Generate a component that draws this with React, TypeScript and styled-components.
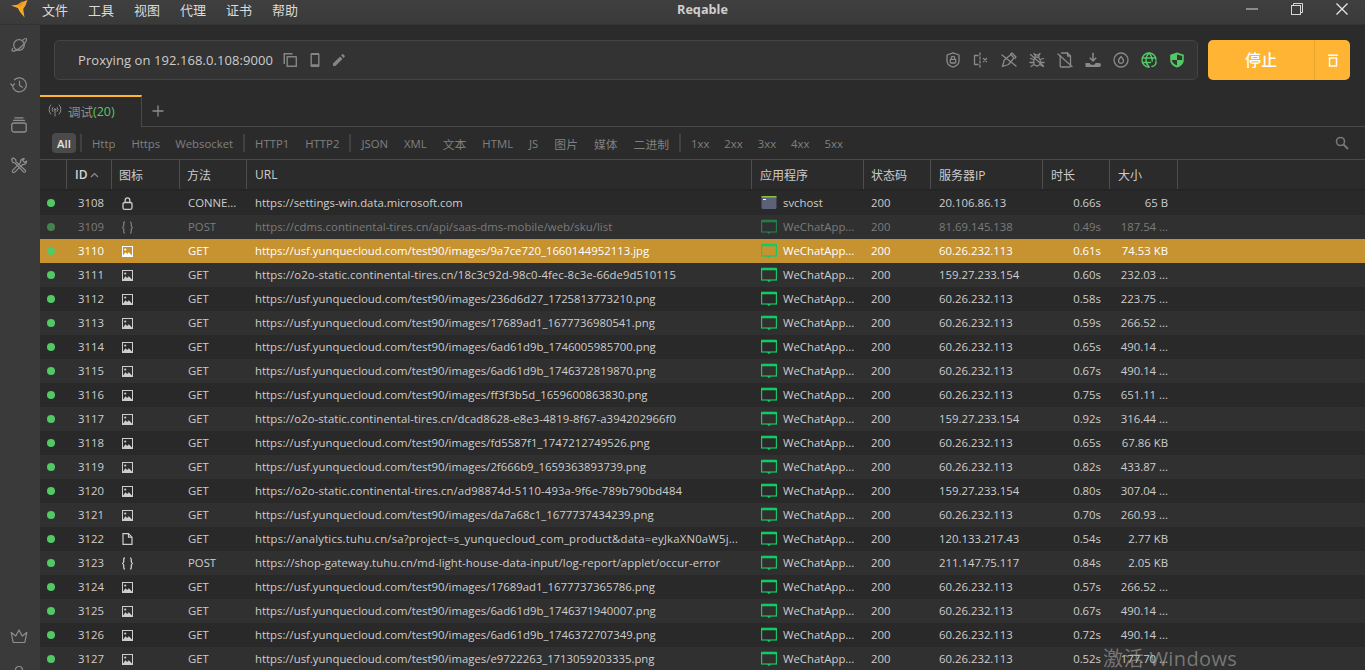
import React from 'react';
import styled, { createGlobalStyle } from 'styled-components';

const Global = createGlobalStyle`
  html, body { margin: 0; padding: 0; height: 100%; background: #2b2b2b; overflow: hidden; }
  #root { height: 100%; }
  * { box-sizing: border-box; }
`;

const FONT = `"Open Sans", "Noto Sans", "Noto Sans CJK SC", sans-serif`;

const Shell = styled.div`
  position: relative;
  width: 1365px;
  height: 670px;
  overflow: hidden;
  display: flex;
  flex-direction: column;
  background: #2b2b2b;
  color: #cfcfcf;
  font-family: ${FONT};
  font-size: 11.35px;
`;
const TitleBar = styled.header`
  height: 25px;
  flex: none;
  display: flex;
  align-items: center;
  padding-bottom: 6px;
  background: linear-gradient(#3f3f3f, #3a3a3a);
  border-bottom: 1px solid #333333;
`;
const TitleLeft = styled.div`
  width: 677px;
  flex: none;
  display: flex;
  align-items: center;
  padding-left: 11px;
`;
const Menu = styled.nav`
  display: flex;
  gap: 20px;
  margin-left: 13px;
  font-size: 13px;
  color: #dadada;
`;
const AppName = styled.div`
  font-size: 12.7px;
  font-weight: 700;
  color: #cfcfcf;
`;
const WinControls = styled.div`
  margin-left: auto;
  display: flex;
  align-items: center;
  gap: 33px;
  padding-right: 17px;
`;
const Body = styled.div`
  flex: 1;
  min-height: 0;
  display: flex;
`;
const Sidebar = styled.aside`
  width: 40px;
  flex: none;
  display: flex;
  flex-direction: column;
  align-items: center;
  background: #3a3a3a;
  padding-right: 2px;
  color: #8e8e8e;
`;
const SideIcon = styled.div`
  height: 40px;
  flex: none;
  display: flex;
  align-items: center;
  justify-content: center;
`;
const SideSpacer = styled.div`
  flex: 1;
`;
const SideBottom = styled.div`
  height: 43px;
  flex: none;
  display: flex;
  flex-direction: column;
  align-items: center;
  overflow: hidden;
  gap: 20px;
  svg { flex: none; }
`;
const Main = styled.main`
  flex: 1;
  min-width: 0;
  display: flex;
  flex-direction: column;
`;
const TopRow = styled.div`
  height: 70px;
  flex: none;
  display: flex;
  gap: 10px;
  padding: 15px 15px 0 14px;
`;
const ProxyBar = styled.div`
  width: 1144px;
  height: 40px;
  display: flex;
  align-items: center;
  background: #333333;
  border: 1px solid #444444;
  border-radius: 5px;
  padding: 0 12px 0 23px;
`;
const ProxyText = styled.span`
  font-size: 13px;
  letter-spacing: 0.07px;
  color: #cccccc;
  margin-right: 6px;
`;
const ProxyAction = styled.span`
  display: flex;
  width: 24px;
  justify-content: center;
  color: #858585;
`;
const StatusIcons = styled.div`
  margin-left: auto;
  display: flex;
  gap: 12px;
  align-items: center;
`;
const StatusIcon = styled.span<{ $on?: boolean }>`
  display: flex;
  color: ${p => (p.$on ? '#55c866' : '#8a8a8a')};
`;
const StopButton = styled.div`
  width: 142px;
  height: 40px;
  display: flex;
  border-radius: 5px;
  background: #ffb433;
  color: #ffffff;
`;
const StopLabel = styled.div`
  width: 107px;
  display: flex;
  align-items: center;
  justify-content: center;
  padding-bottom: 2px;
  font-size: 16px;
  font-weight: 500;
  border-right: 1px solid #eaa52e;
`;
const StopTrash = styled.div`
  flex: 1;
  display: flex;
  align-items: center;
  justify-content: center;
`;
const TabBar = styled.div`
  height: 32px;
  flex: none;
  display: flex;
  align-items: center;
  border-bottom: 1px solid #4a4a4a;
`;
const Tab = styled.div`
  width: 102px;
  height: 32px;
  display: flex;
  align-items: center;
  padding: 0 0 2px 8px;
  border-top: 2px solid #ffb433;
  border-right: 1px solid #4a4a4a;
  background: #2b2b2b;
  color: #8d8d8d;
  font-size: 12.5px;
  margin-bottom: -1px;
`;
const TabLabel = styled.span`
  margin-left: 6px;
`;
const TabCount = styled.span`
  color: #55c866;
  font-size: 12.5px;
`;
const AddTab = styled.div`
  display: flex;
  margin-left: 10px;
  color: #8d8d8d;
`;
const FilterRow = styled.div`
  height: 33px;
  flex: none;
  display: flex;
  align-items: center;
  padding: 0 16px 0 12px;
  border-bottom: 1px solid #4a4a4a;
  color: #808080;
`;
const Chip = styled.span<{ $active?: boolean; $gap?: number; $cjk?: boolean }>`
  margin-right: ${p => p.$gap ?? 16}px;
  font-size: ${p => (p.$cjk ? '11.8px' : '11.35px')};
  ${p => p.$active && `
    width: 24px;
    height: 20px;
    display: flex;
    align-items: center;
    justify-content: center;
    background: #4a4a4a;
    border-radius: 4px;
    color: #e2e2e2;
    font-weight: 600;
  `}
`;
const Divider = styled.span`
  width: 2px;
  height: 18px;
  background: #414141;
  margin-right: 10px;
`;
const SearchIcon = styled.span`
  margin-left: auto;
  display: flex;
  color: #777777;
`;

const COLS = '27px 45px 68px 67px 505px 112px 67px 112px 67px 68px 1fr';

const HeaderRow = styled.div`
  height: 31px;
  flex: none;
  display: grid;
  grid-template-columns: ${COLS};
  border-bottom: 2px solid #252525;
`;
const HeadCell = styled.div<{ $pad?: number }>`
  display: flex;
  align-items: center;
  height: 29px;
  padding-left: ${p => p.$pad ?? 8}px;
  border-right: 1px solid #4e4e4e;
  color: #cccccc;
  font-size: 12px;
  white-space: nowrap;
`;
const SortId = styled.span`
  font-weight: 600;
  color: #d4d4d4;
  margin-right: 3px;
`;
const SortArrow = styled.span`
  display: flex;
  color: #8d8d8d;
`;
const Rows = styled.div`
  flex: 1;
  min-height: 0;
  overflow: hidden;
`;
const Row = styled.div<{ $idx: number; $selected?: boolean; $dim?: boolean }>`
  height: 24px;
  display: grid;
  grid-template-columns: ${COLS};
  align-items: center;
  background: ${p => (p.$selected ? '#c79230' : p.$idx % 2 === 0 ? '#292929' : '#303030')};
  color: ${p => (p.$selected ? '#ffffff' : p.$dim ? '#7b7b7b' : '#cdcdcd')};
  white-space: nowrap;
`;
const Dot = styled.span<{ $dim?: boolean }>`
  width: 8px;
  height: 8px;
  border-radius: 50%;
  margin-left: 7px;
  background: ${p => (p.$dim ? '#44824f' : '#55c866')};
`;
const TextCell = styled.span`
  padding-bottom: 2px;
`;
const IdCell = styled(TextCell)`
  padding-left: 11px;
`;
const IconCell = styled.span`
  display: flex;
  padding-left: 10px;
`;
const MethodCell = styled(TextCell)`
  padding-left: 8px;
`;
const UrlCell = styled(TextCell)<{ $fit?: number }>`
  padding-left: 8px;
  letter-spacing: ${p => p.$fit ?? 0}px;
`;
const AppCell = styled.span`
  display: flex;
  align-items: center;
  padding-left: 9px;
  gap: 6px;
`;
const AppLabel = styled(TextCell)``;
const StatusCell = styled(TextCell)`
  padding-left: 7px;
`;
const IpCell = styled(TextCell)`
  padding-left: 8px;
`;
const TimeCell = styled(TextCell)`
  text-align: right;
  padding-right: 9px;
`;
const SizeCell = styled(TextCell)`
  text-align: right;
  padding-right: 10px;
`;
const Watermark = styled.div`
  position: absolute;
  left: 1103px;
  top: 643px;
  font-family: "Open Sans", "Noto Sans CJK SC", sans-serif;
  font-size: 20px;
  letter-spacing: 0.4px;
  color: rgba(180, 180, 180, 0.55);
  pointer-events: none;
  white-space: nowrap;
`;

const Ico = ({ s = 16, w = 16, h, sw = 1.3, children }: { s?: number; w?: number; h?: number; sw?: number; children: React.ReactNode }) => (
  <svg width={s} height={h ? (s * h) / w : s} viewBox={`0 0 ${w} ${h ?? w}`} fill="none" stroke="currentColor" strokeWidth={sw} strokeLinecap="round" strokeLinejoin="round">
    {children}
  </svg>
);

const Logo = () => (
  <svg width="18" height="18" viewBox="0 0 18 18">
    <path d="M0 5.500 L6.500 4.800 L10 2.600 L16.500 0 L14.500 5.500 L12.200 9 L13.500 17.500 L9 12 L6.800 8 Z" fill="#f7a72a" />
    <path d="M6.500 4.800 L10 2.600 L10.800 1 L12 3.500 L9 7 Z" fill="#e8931a" />
  </svg>
);

const Planet = () => (
  <Ico s={18} w={18} sw={1.2}>
    <circle cx="9" cy="9" r="5.300" />
    <path d="M13 4c1.300-1.200 2.600-1.800 3.300-1.300 1 .8-.4 3.400-3.200 6.300-3.200 3.300-7.300 6-9.800 6.200-1.500.1-1.700-1-.6-2.700" />
  </Ico>
);
const HistoryIco = () => (
  <Ico s={18} w={18} sw={1.2}>
    <path d="M2.400 9.500A7 7 0 1 0 4.500 3.800" />
    <path d="M.8 7.800l1.700 2 2-1.800" />
    <path d="M9.500 5.200V9.500l3 1.700" />
  </Ico>
);
const LayersIco = () => (
  <Ico s={18} w={18} sw={1.3}>
    <rect x="1.800" y="7" width="14.400" height="9" rx="2" />
    <path d="M3.500 4.300h11" />
    <path d="M5 1.800h8" />
  </Ico>
);
const ToolsIco = () => (
  <Ico s={18} w={18} sw={1.2}>
    <path d="M3 1.800l2.600 1.600.4 2.200 9.200 8.600a1.200 1.200 0 0 1-1.700 1.700L5 7 2.800 6.400 1.600 3.500z" />
    <path d="M10.600 6.400L2.800 14.200a1.400 1.400 0 0 0 2 2l7.800-7.800c2 .6 4.200-1 4-3.400l-2 1.500-1.800-1.800 1.500-2c-2.500-.2-4.200 1.700-3.700 3.700z" />
  </Ico>
);
const Crown = () => (
  <Ico s={18} w={18} sw={1.200}>
    <path d="M3.200 15.500L1.200 5.500 5.800 9 9 3l3.200 6 4.600-3.500-2 10z" />
  </Ico>
);
const AvatarPeek = () => (
  <Ico s={14} w={14} sw={1.200}>
    <circle cx="7" cy="5" r="3.500" />
  </Ico>
);
const CopyIco = () => (
  <svg width="15" height="16" viewBox="0 0 15 16" fill="currentColor">
    <path d="M.5 1h9v1.400H2V12H.5z" />
    <path fillRule="evenodd" d="M3.500 4H13a1 1 0 0 1 1 1v10H3.500zm1.400 1.400v8.200h7.700V5.400z" />
  </svg>
);
const PhoneIco = () => (
  <svg width="16" height="16" viewBox="0 0 16 16" fill="currentColor">
    <path fillRule="evenodd" d="M4.800 1h6.400c.7 0 1.300.6 1.300 1.300v11.400c0 .7-.6 1.300-1.300 1.300H4.800c-.7 0-1.300-.6-1.300-1.300V2.300C3.500 1.600 4.100 1 4.800 1zm.1 2v9.200h6.200V3z" />
  </svg>
);
const PenIco = () => (
  <svg width="14" height="14" viewBox="0 0 14 14" fill="currentColor">
    <path d="M1 10.600V13h2.400l7.100-7.100-2.400-2.400zM12.700 3.700a.7.7 0 0 0 0-1L11.300 1.300a.7.7 0 0 0-1 0L9.100 2.500l2.400 2.400z" />
  </svg>
);
const ShieldLock = () => (
  <Ico s={16} w={16}>
    <path d="M8 .8l6 2.200v6c0 3-2.800 5-6 6.200-3.200-1.200-6-3.200-6-6.200V3z" />
    <rect x="5.300" y="7.300" width="5.400" height="3.700" rx=".8" />
    <path d="M6.300 7.300V6a1.700 1.700 0 0 1 3.400 0v1.300" />
  </Ico>
);
const SplitX = () => (
  <Ico s={16} w={16}>
    <path d="M7 .8v2.200M7 5v2M7 9v2M7 13v2.200" />
    <path d="M5 3.500H1.500v9H5" />
    <path d="M10.500 6.500l3 3M13.500 6.500l-3 3" />
  </Ico>
);
const PenOff = () => (
  <Ico s={16} w={16}>
    <path d="M1 3l14 11" />
    <path d="M1.500 14.500l1.800-6.500 6.700-5.500 3 3.500-5.500 6.500z" />
    <path d="M9.500 2l1.500-1 4 4-1 1.500" />
  </Ico>
);
const BugOff = () => (
  <Ico s={16} w={16}>
    <path d="M1.500 2.500l13 11.500" />
    <ellipse cx="8" cy="9.500" rx="3.300" ry="4.500" />
    <path d="M6 4.800a2 2 0 0 1 4 0M5 1.500l1.500 2M11 1.500l-1.500 2M1.500 6.500l3.200 1M14.500 6.500l-3.200 1M1 10.500h3.700M11.300 10.500H15M2 14.500l3-2M14 14.500l-3-2" />
  </Ico>
);
const DocOff = () => (
  <Ico s={16} w={16}>
    <path d="M1 2l14 12.500" />
    <path d="M4.500 1h6l3 3v10.200a.8.8 0 0 1-.8.8H4a.8.8 0 0 1-.8-.8V3.500" />
    <path d="M10.500 1v3h3" />
  </Ico>
);
const DownloadDisk = () => (
  <svg width="16" height="16" viewBox="0 0 16 16">
    <path d="M8 .8v8.200M4.800 5.800L8 9l3.200-3.200" fill="none" stroke="currentColor" strokeWidth="1.500" />
    <path d="M.5 11h4l1.500 1.700h3.500l1-1.700h3.500a2 2 0 0 1 0 4H.5z" fill="currentColor" />
  </svg>
);
const Drop = () => (
  <Ico s={16} w={16}>
    <circle cx="8" cy="8" r="7" />
    <path d="M8 4.500s2.500 2.700 2.500 4.300a2.500 2.500 0 0 1-5 0C5.500 7.200 8 4.500 8 4.500z" />
  </Ico>
);
const GlobeSync = () => (
  <Ico s={16} w={16} sw={1.400}>
    <path d="M15 8A7 7 0 1 0 8 15" />
    <path d="M1.500 6h13M1.500 10.500h8M8 1c-4 4-4 10 0 14M8 1c2.400 2.400 3.300 5.400 3.200 8" />
    <path d="M15 9.500a4.500 4.500 0 0 1-4 5" />
  </Ico>
);
const ShieldFill = () => (
  <svg width="16" height="16" viewBox="0 0 16 16">
    <path d="M8 .4l6.800 2.400v5.200c0 3.600-2.900 6.400-6.800 7.600-3.900-1.200-6.800-4-6.800-7.600V2.800z" fill="#55c866" />
    <path d="M8 2.400V8h5.200V4.100zM8 8H2.800c.3 2.500 2.400 4.400 5.200 5.400z" fill="#2d3a30" />
  </svg>
);
const WifiIco = () => (
  <Ico s={14} w={14} sw={1}>
    <circle cx="7" cy="5.500" r=".8" fill="currentColor" />
    <path d="M7 7v5" />
    <path d="M4.800 7.500a3 3 0 0 1 0-4M9.200 3.500a3 3 0 0 1 0 4M2.800 10a6.500 6.500 0 0 1 0-9M11.200 1a6.500 6.500 0 0 1 0 9" />
  </Ico>
);
const LockIco = () => (
  <svg width="11" height="13" viewBox="0 0 11 13" fill="none" stroke="currentColor" strokeWidth="1.300">
    <rect x="1" y="5.500" width="9" height="6.800" rx="1.500" />
    <path d="M3.200 5.500V3.200a2.300 2.300 0 0 1 4.600 0v2.300" />
  </svg>
);
const BracesIco = () => (
  <svg width="11" height="13" viewBox="0 0 11 13" fill="none" stroke="currentColor" strokeWidth="1.300">
    <path d="M3 .8c-1.300 0-1.300.9-1.300 1.900v2c0 .9-.7 1.500-1.200 1.800.5.300 1.200.9 1.200 1.800v2c0 1 0 1.900 1.300 1.900" />
    <path d="M8 .8c1.300 0 1.300.9 1.300 1.900v2c0 .9.700 1.500 1.200 1.800-.5.300-1.200.9-1.200 1.800v2c0 1 0 1.900-1.300 1.900" />
  </svg>
);
const ImageIco = () => (
  <svg width="11" height="11" viewBox="0 0 11 11">
    <rect x=".5" y=".5" width="10" height="10" fill="none" stroke="currentColor" />
    <path d="M1 9.500L3.500 6.300 5.200 8l1.600-1.700L10 9.500V10.500H1z" fill="currentColor" />
    <circle cx="3.200" cy="3.500" r="1.100" fill="currentColor" />
  </svg>
);
const FileIco = () => (
  <svg width="11" height="12" viewBox="0 0 11 12" fill="none" stroke="currentColor" strokeWidth="1.200">
    <path d="M1 .7h5.500L10 4.200v7.100H1z" />
    <path d="M6.500 .7v3.500H10" />
  </svg>
);
const WeChatApp = ({ faded }: { faded?: boolean }) => (
  <svg width="16" height="16" viewBox="0 0 16 16" opacity={faded ? 0.5 : 1}>
    <rect x=".6" y="1.500" width="14.800" height="11.500" fill="none" stroke="#17c964" strokeWidth="1.200" />
    <rect x=".6" y=".8" width="14.800" height="2.500" fill="#17c964" />
    <path d="M6 13h4l-2 2.200z" fill="#17c964" />
  </svg>
);
const SvchostIco = () => (
  <svg width="16" height="16" viewBox="0 0 16 16">
    <rect x=".5" y="1" width="15" height="13" rx="1.500" fill="#5c6078" />
    <rect x=".5" y="1" width="15" height="1.500" fill="#8cbf3f" />
    <rect x="2" y="4" width="3" height="1" fill="#ffffff" />
  </svg>
);

const pic = 'https://usf.yunquecloud.com/test90/images/';
const o2o = 'https://o2o-static.continental-tires.cn/';
const IP = '60.26.232.113';
const IP2 = '159.27.233.154';
type Kind = 'lock' | 'json' | 'image' | 'file';
type Req = { id: number; k: Kind; m: string; u: string; ip: string; t: string; s: string; fit?: number };
const W: Req[] = [
  { id: 3108, k: 'lock', m: 'CONNE...', u: 'https://settings-win.data.microsoft.com', ip: '20.106.86.13', t: '0.66s', s: '65 B' },
  { id: 3109, k: 'json', m: 'POST', u: 'https://cdms.continental-tires.cn/api/saas-dms-mobile/web/sku/list', ip: '81.69.145.138', t: '0.49s', s: '187.54 ...', fit: 0.045 },
  { id: 3110, k: 'image', m: 'GET', u: pic + '9a7ce720_1660144952113.jpg', ip: IP, t: '0.61s', s: '74.53 KB' },
  { id: 3111, k: 'image', m: 'GET', u: o2o + '18c3c92d-98c0-4fec-8c3e-66de9d510115', ip: IP2, t: '0.60s', s: '232.03 ...', fit: 0.08 },
  { id: 3112, k: 'image', m: 'GET', u: pic + '236d6d27_1725813773210.png', ip: IP, t: '0.58s', s: '223.75 ...' },
  { id: 3113, k: 'image', m: 'GET', u: pic + '17689ad1_1677736980541.png', ip: IP, t: '0.59s', s: '266.52 ...' },
  { id: 3114, k: 'image', m: 'GET', u: pic + '6ad61d9b_1746005985700.png', ip: IP, t: '0.65s', s: '490.14 ...' },
  { id: 3115, k: 'image', m: 'GET', u: pic + '6ad61d9b_1746372819870.png', ip: IP, t: '0.67s', s: '490.14 ...' },
  { id: 3116, k: 'image', m: 'GET', u: pic + 'ff3f3b5d_1659600863830.png', ip: IP, t: '0.75s', s: '651.11 ...' },
  { id: 3117, k: 'image', m: 'GET', u: o2o + 'dcad8628-e8e3-4819-8f67-a394202966f0', ip: IP2, t: '0.92s', s: '316.44 ...', fit: 0.07 },
  { id: 3118, k: 'image', m: 'GET', u: pic + 'fd5587f1_1747212749526.png', ip: IP, t: '0.65s', s: '67.86 KB' },
  { id: 3119, k: 'image', m: 'GET', u: pic + '2f666b9_1659363893739.png', ip: IP, t: '0.82s', s: '433.87 ...' },
  { id: 3120, k: 'image', m: 'GET', u: o2o + 'ad98874d-5110-493a-9f6e-789b790bd484', ip: IP2, t: '0.80s', s: '307.04 ...', fit: 0.08 },
  { id: 3121, k: 'image', m: 'GET', u: pic + 'da7a68c1_1677737434239.png', ip: IP, t: '0.70s', s: '260.93 ...' },
  { id: 3122, k: 'file', m: 'GET', u: 'https://analytics.tuhu.cn/sa?project=s_yunquecloud_com_product&data=eyJkaXN0aW5j...', ip: '120.133.217.43', t: '0.54s', s: '2.77 KB', fit: 0.18 },
  { id: 3123, k: 'json', m: 'POST', u: 'https://shop-gateway.tuhu.cn/md-light-house-data-input/log-report/applet/occur-error', ip: '211.147.75.117', t: '0.84s', s: '2.05 KB', fit: 0.095 },
  { id: 3124, k: 'image', m: 'GET', u: pic + '17689ad1_1677737365786.png', ip: IP, t: '0.57s', s: '266.52 ...' },
  { id: 3125, k: 'image', m: 'GET', u: pic + '6ad61d9b_1746371940007.png', ip: IP, t: '0.67s', s: '490.14 ...' },
  { id: 3126, k: 'image', m: 'GET', u: pic + '6ad61d9b_1746372707349.png', ip: IP, t: '0.72s', s: '490.14 ...' },
  { id: 3127, k: 'image', m: 'GET', u: pic + 'e9722263_1713059203335.png', ip: IP, t: '0.52s', s: '177.70 ...' },
];
const kindIcon = (k: Kind) =>
  k === 'lock' ? <LockIco /> : k === 'json' ? <BracesIco /> : k === 'file' ? <FileIco /> : <ImageIco />;

const menus = ['文件', '工具', '视图', '代理', '证书', '帮助'];
const heads = ['图标', '方法', 'URL', '应用程序', '状态码', '服务器IP', '时长', '大小'];

export default function App() {
  return (
    <Shell>
      <Global />
      <TitleBar>
        <TitleLeft>
          <Logo />
          <Menu>{menus.map(m => <span key={m}>{m}</span>)}</Menu>
        </TitleLeft>
        <AppName>Reqable</AppName>
        <WinControls>
          <svg width="12" height="12" viewBox="0 0 12 12" stroke="#d8d8d8" fill="none"><path d="M0 6h12" /></svg>
          <svg width="12" height="12" viewBox="0 0 12 12" stroke="#d8d8d8" fill="none"><rect x=".5" y="2.500" width="9" height="9" /><path d="M2.500 2.500V.5h9v9h-2" /></svg>
          <svg width="12" height="12" viewBox="0 0 12 12" stroke="#e8e8e8" strokeWidth="1.300" fill="none"><path d="M.5.500l11 11M11.500.5l-11 11" /></svg>
        </WinControls>
      </TitleBar>
      <Body>
        <Sidebar>
          <SideIcon><Planet /></SideIcon>
          <SideIcon><HistoryIco /></SideIcon>
          <SideIcon><LayersIco /></SideIcon>
          <SideIcon><ToolsIco /></SideIcon>
          <SideSpacer />
          <SideBottom><Crown /><AvatarPeek /></SideBottom>
        </Sidebar>
        <Main>
          <TopRow>
            <ProxyBar>
              <ProxyText>Proxying on 192.168.0.108:9000</ProxyText>
              <ProxyAction><CopyIco /></ProxyAction>
              <ProxyAction><PhoneIco /></ProxyAction>
              <ProxyAction><PenIco /></ProxyAction>
              <StatusIcons>
                <StatusIcon><ShieldLock /></StatusIcon>
                <StatusIcon><SplitX /></StatusIcon>
                <StatusIcon><PenOff /></StatusIcon>
                <StatusIcon><BugOff /></StatusIcon>
                <StatusIcon><DocOff /></StatusIcon>
                <StatusIcon><DownloadDisk /></StatusIcon>
                <StatusIcon><Drop /></StatusIcon>
                <StatusIcon $on><GlobeSync /></StatusIcon>
                <StatusIcon $on><ShieldFill /></StatusIcon>
              </StatusIcons>
            </ProxyBar>
            <StopButton>
              <StopLabel>停止</StopLabel>
              <StopTrash>
                <svg width="10" height="13" viewBox="0 0 10 13" fill="none" stroke="#fff" strokeWidth="1.500"><path d="M0 1.200h10" /><rect x="1.500" y="4" width="7" height="8" /></svg>
              </StopTrash>
            </StopButton>
          </TopRow>
          <TabBar>
            <Tab>
              <WifiIco />
              <TabLabel>调试</TabLabel><TabCount>(20)</TabCount>
            </Tab>
            <AddTab>
              <svg width="12" height="12" viewBox="0 0 12 12" stroke="currentColor" strokeWidth="1.300"><path d="M6 .5v11M.5 6h11" /></svg>
            </AddTab>
          </TabBar>
          <FilterRow>
            <Chip $active $gap={4}>All</Chip>
            <Divider />
            <Chip>Http</Chip><Chip $gap={15}>Https</Chip><Chip $gap={10}>Websocket</Chip>
            <Divider />
            <Chip>HTTP1</Chip><Chip $gap={10}>HTTP2</Chip>
            <Divider />
            <Chip>JSON</Chip><Chip>XML</Chip><Chip $cjk>文本</Chip><Chip>HTML</Chip><Chip>JS</Chip><Chip $cjk>图片</Chip><Chip $cjk>媒体</Chip><Chip $cjk $gap={10}>二进制</Chip>
            <Divider />
            <Chip $gap={15}>1xx</Chip><Chip $gap={15}>2xx</Chip><Chip $gap={15}>3xx</Chip><Chip $gap={15}>4xx</Chip><Chip>5xx</Chip>
            <SearchIcon>
              <svg width="14" height="14" viewBox="0 0 14 14" fill="none" stroke="currentColor" strokeWidth="1.600"><circle cx="5.500" cy="5.500" r="4" /><path d="M8.500 8.500l4.500 4.500" strokeWidth="2" /></svg>
            </SearchIcon>
          </FilterRow>
          <HeaderRow>
            <HeadCell />
            <HeadCell>
              <SortId>ID</SortId>
              <SortArrow><svg width="9" height="6" viewBox="0 0 9 6" fill="none" stroke="currentColor" strokeWidth="1.200"><path d="M1 5l3.500-3.500L8 5" /></svg></SortArrow>
            </HeadCell>
            {heads.map((h, i) => <HeadCell key={h} $pad={i === 2 || i === 3 || i === 5 || i === 6 || i === 7 ? 8 : 7}>{h}</HeadCell>)}
          </HeaderRow>
          <Rows>
            {W.map((r, i) => {
              const dim = r.id === 3109;
              const sel = r.id === 3110;
              return (
                <Row key={r.id} $idx={i} $selected={sel} $dim={dim}>
                  <Dot $dim={dim} />
                  <IdCell>{r.id}</IdCell>
                  <IconCell>{kindIcon(r.k)}</IconCell>
                  <MethodCell>{r.m}</MethodCell>
                  <UrlCell $fit={r.fit}>{r.u}</UrlCell>
                  <AppCell>
                    {i === 0 ? <SvchostIco /> : <WeChatApp faded={dim} />}
                    <AppLabel>{i === 0 ? 'svchost' : 'WeChatApp...'}</AppLabel>
                  </AppCell>
                  <StatusCell>200</StatusCell>
                  <IpCell>{r.ip}</IpCell>
                  <TimeCell>{r.t}</TimeCell>
                  <SizeCell>{r.s}</SizeCell>
                </Row>
              );
            })}
          </Rows>
        </Main>
      </Body>
      <Watermark>激活 Windows</Watermark>
    </Shell>
  );
}
